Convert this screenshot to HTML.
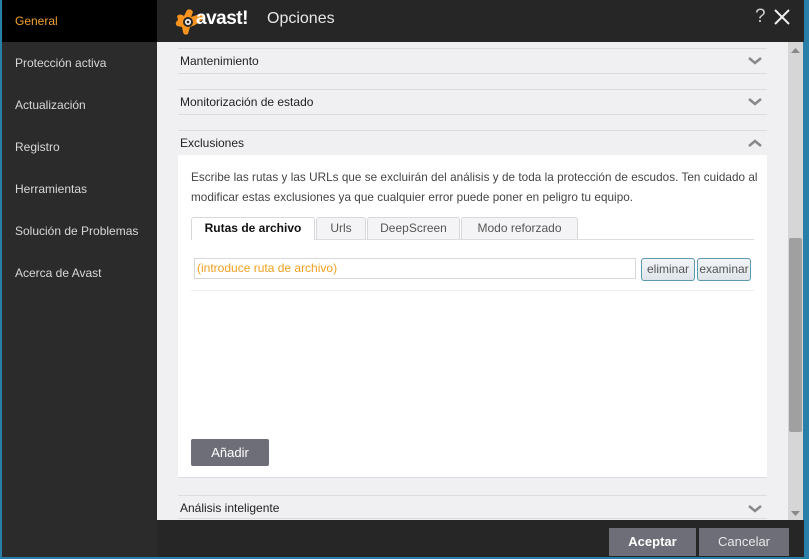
<!DOCTYPE html>
<html><head><meta charset="utf-8"><style>
*{margin:0;padding:0;box-sizing:border-box}
body{width:809px;height:559px;overflow:hidden;background:#2a7fa8;font-family:"Liberation Sans",sans-serif;position:relative}
.abs{position:absolute}
.side{left:2px;top:0;width:155px;height:557px;background:#2b2b2b}
.side .it{position:absolute;left:13px;color:#d8d8d8;font-size:12px}
.title{left:157px;top:0;width:647px;height:42px;background:#262626}
.content{left:157px;top:42px;width:631px;height:478px;background:#f0f0f3;overflow:hidden}
.line{position:absolute;left:21px;width:589px;height:1px;background:#dcdce0}
.hd{position:absolute;left:23px;font-size:12px;color:#222}
.chev{position:absolute;left:591px}
.bottom{left:157px;top:520px;width:647px;height:37px;background:#262626}
.btn{position:absolute;top:528px;height:28px;background:#6e6e78;color:#fff;font-size:13px;text-align:center;line-height:28px}
.tab{position:absolute;top:217px;height:22px;border:1px solid #d8d8dc;border-bottom:none;border-radius:3px 3px 0 0;background:#f4f4f6;font-size:12px;color:#555;text-align:center;line-height:21px}
.sb{position:absolute;top:258px;height:23px;border:1px solid #5a9ab0;border-radius:3px;background:linear-gradient(#f4f6f8,#dfe4ea);font-size:12px;color:#555;text-align:center;line-height:20px}
</style></head><body>
<div class="abs side">
 <div class="abs" style="left:0;top:0;width:155px;height:42px;background:#000"></div>
 <div class="it" style="top:14px;color:#f0a030">General</div>
 <div class="it" style="top:56px">Protección activa</div>
 <div class="it" style="top:98px">Actualización</div>
 <div class="it" style="top:140px">Registro</div>
 <div class="it" style="top:182px">Herramientas</div>
 <div class="it" style="top:224px">Solución de Problemas</div>
 <div class="it" style="top:266px">Acerca de Avast</div>
</div>
<div class="abs title">
 <svg class="abs" style="left:17px;top:5px" width="36" height="32" viewBox="0 0 36 32"><path d="M3 11 Q6 8 10 11 L13 5 Q17 3 19 7 L17 12 L26 9 Q31 10 28 15 L21 20 L16 22 L14 29 Q10 31 9 27 L8 22 L3 21 Q0 18 4 15 Z" fill="#f7931e"/><circle cx="14" cy="17" r="5" fill="#262626"/><circle cx="14" cy="17" r="3" fill="#fff"/><circle cx="14" cy="17" r="1.4" fill="#262626"/></svg>
 <div class="abs" style="left:39px;top:8px;color:#fff;font-size:19px;font-weight:bold;letter-spacing:-0.5px">avast!</div>
 <div class="abs" style="left:110px;top:10px;color:#e8e8e8;font-size:16px">Opciones</div>
 <div class="abs" style="left:598px;top:6px;color:#ccc;font-size:19px">?</div>
 <svg class="abs" style="left:617px;top:9px" width="16" height="16"><path d="M1 1 L15 15 M15 1 L1 15" stroke="#eee" stroke-width="2"/></svg>
</div>
<div class="abs content">
 <div class="line" style="top:6px"></div>
 <div class="hd" style="top:12px">Mantenimiento</div>
 <svg class="chev" style="top:14px" width="14" height="10"><path d="M1 2 L7 7 L13 2" stroke="#888" stroke-width="2.5" fill="none"/></svg>
 <div class="line" style="top:31px"></div>
 <div class="line" style="top:47px"></div>
 <div class="hd" style="top:53px">Monitorización de estado</div>
 <svg class="chev" style="top:55px" width="14" height="10"><path d="M1 2 L7 7 L13 2" stroke="#888" stroke-width="2.5" fill="none"/></svg>
 <div class="line" style="top:72px"></div>
 <div class="line" style="top:88px"></div>
 <div class="hd" style="top:94px">Exclusiones</div>
 <svg class="chev" style="top:96px" width="14" height="10"><path d="M1 8 L7 3 L13 8" stroke="#888" stroke-width="2.5" fill="none"/></svg>
 <div class="abs" style="left:21px;top:113px;width:589px;height:323px;background:#fff;border-bottom:1px solid #dcdce0"></div>
 <div class="line" style="top:453px"></div>
 <div class="hd" style="top:459px">Análisis inteligente</div>
 <svg class="chev" style="top:462px" width="14" height="10"><path d="M1 2 L7 7 L13 2" stroke="#888" stroke-width="2.5" fill="none"/></svg>
 <div class="line" style="top:476px"></div>
</div>
<div class="abs" style="left:191px;top:168px;width:600px;font-size:11.7px;letter-spacing:0.05px;color:#444;line-height:20px;white-space:nowrap">Escribe las rutas y las URLs que se excluirán del análisis y de toda la protección de escudos. Ten cuidado al<br>modificar estas exclusiones ya que cualquier error puede poner en peligro tu equipo.</div>
<div class="abs" style="left:191px;top:239px;width:563px;height:1px;background:#ddd"></div>
<div class="tab" style="left:191px;width:124px;background:#fff;color:#111;font-weight:bold;height:23px">Rutas de archivo</div>
<div class="tab" style="left:316px;width:50px">Urls</div>
<div class="tab" style="left:367px;width:93px">DeepScreen</div>
<div class="tab" style="left:461px;width:117px">Modo reforzado</div>
<div class="abs" style="left:194px;top:258px;width:442px;height:21px;border:1px solid #d8d8d8;font-size:12px;color:#f0a020;line-height:19px;padding-left:2px">(introduce ruta de archivo)</div>
<div class="sb" style="left:641px;width:54px">eliminar</div>
<div class="sb" style="left:697px;width:54px">examinar</div>
<div class="abs" style="left:191px;top:290px;width:563px;height:1px;background:#eee"></div>
<div class="abs" style="left:191px;top:439px;width:78px;height:27px;background:#6e6e78;border-radius:2px;color:#fff;font-size:13px;text-align:center;line-height:27px">Añadir</div>
<div class="abs" style="left:788px;top:42px;width:15px;height:478px;background:#d6d6d6"></div>
<div class="abs" style="left:789px;top:238px;width:13px;height:194px;background:#a0a0a0;border-radius:2px"></div>
<svg class="abs" style="left:790px;top:47px" width="11" height="8"><path d="M1 6 L5.5 1 L10 6Z" fill="#888"/></svg>
<svg class="abs" style="left:790px;top:510px" width="11" height="8"><path d="M1 1 L5.5 6 L10 1Z" fill="#888"/></svg>
<div class="abs bottom"></div>
<div class="btn" style="left:609px;width:87px;font-weight:bold">Aceptar</div>
<div class="btn" style="left:699px;width:90px;color:#e8e8e8">Cancelar</div>
</body></html>
